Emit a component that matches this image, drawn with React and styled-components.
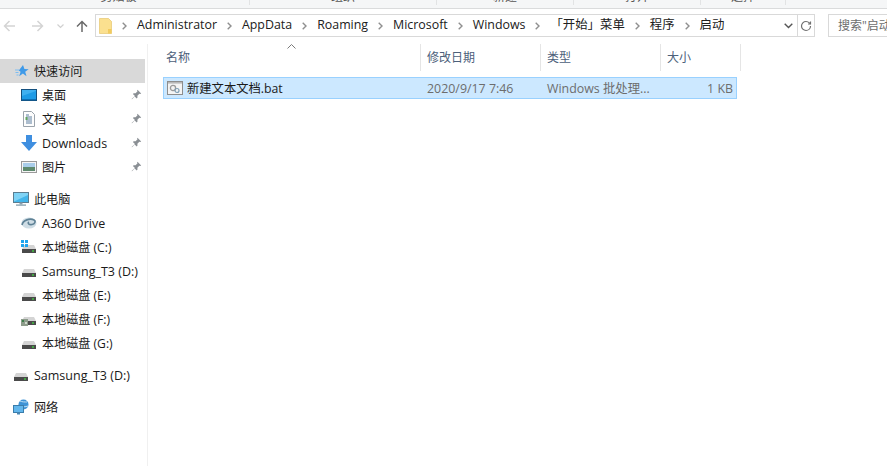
import React from 'react';
import styled, { createGlobalStyle } from 'styled-components';

const Global = createGlobalStyle`
  html, body { margin: 0; padding: 0; background: #fff; }
  body { font-family: "Liberation Sans", "Noto Sans CJK SC", sans-serif; }
`;
const FONT = `"Open Sans", "Noto Sans CJK SC", sans-serif`;

const Page = styled.div`
  width: 887px; height: 466px; overflow: hidden; display: flex; flex-direction: column;
  background: #fff; font-family: ${FONT}; font-size: 12px; color: #1a1a1a;
`;
const Ribbon = styled.div`
  height: 8px; flex: none; background: #f5f6f7; border-bottom: 1px solid #dadbdc;
  display: flex; overflow: hidden;
`;
const RibbonGroup = styled.div`
  width: ${p => p.$w}px; flex: none; height: 5px; border-right: 1px solid #e2e3e4; overflow: hidden;
  position: relative; text-align: center; color: #555; font-size: 12px; line-height: 1; box-sizing: border-box;
`;
const RibbonLabel = styled.span`
  position: absolute; left: 0; right: ${p => p.$pr || 0}px; top: -9px;
`;
const AddressRow = styled.div`
  height: 35px; flex: none; display: flex; align-items: flex-start; padding-top: 5px; box-sizing: border-box;
`;
const NavButton = styled.div`
  width: ${p => p.$w}px; margin-left: ${p => p.$ml}px; flex: none; display: flex; justify-content: center; align-items: center; height: 24px;
`;
const AddressBox = styled.div`
  margin-left: 7px; width: 720px; height: 23px; box-sizing: border-box; border: 1px solid #d9d9d9; display: flex; align-items: center;
`;
const FolderIcon = styled.svg`
  margin-left: 3px; flex: none;
`;
const Crumb = styled.span`
  font-size: 12.4px; white-space: nowrap; color: #202020; line-height: 20px; margin-top: -1px;
`;
const Chev = styled.svg`
  flex: none; margin: 0 10px;
`;
const Spacer = styled.div`flex: 1;`;
const AddrEnd = styled.div`
  width: 17px; flex: none; height: 21px; display: flex; align-items: center; justify-content: center;
`;
const Refresh = styled.div`
  width: 16px; flex: none; height: 21px; border-left: 1px solid #d9d9d9; display: flex; align-items: center; justify-content: center;
`;
const SearchBox = styled.div`
  margin-left: 13px; flex: 1; height: 23px; box-sizing: border-box; border: 1px solid #d9d9d9; border-right: none;
  padding-left: 9px; color: #6d6d6d; font-size: 12px; line-height: 21px; white-space: nowrap; overflow: hidden;
`;
const Body = styled.div`flex: 1; display: flex; min-height: 0;`;
const Sidebar = styled.div`
  width: 147px; flex: none; border-right: 1px solid #f0f0f0; padding-top: 15px;
`;
const NavRow = styled.div`
  height: 24px; width: 145px; display: flex; align-items: center; position: relative;
  padding-left: ${p => p.$indent}px; box-sizing: border-box;
  background: ${p => p.$active ? '#d9d9d9' : 'transparent'};
  margin-top: ${p => p.$gap || 0}px; color: #1a1a1a; white-space: nowrap;
`;
const NavIcon = styled.span`
  width: 16px; height: 16px; flex: none; margin-right: 5px; display: flex;
`;
const NavLabel = styled.span`
  font-size: ${p => p.$latin ? 12.5 : 12.1}px;
`;
const Pin = styled.svg`
  position: absolute; left: 131px; top: 6px;
`;
const Content = styled.div`flex: 1; min-width: 0; padding-left: 15px;`;
const HeaderRow = styled.div`
  height: 27px; display: flex; position: relative; color: #4c607a; font-size: 12px;
`;
const SortCaret = styled.svg`
  position: absolute; left: 124px; top: 0;
`;
const HeaderCell = styled.div`
  width: ${p => p.$w}px; flex: none; box-sizing: border-box; height: 27px; line-height: 27px; padding-left: ${p => p.$pl}px;
  border-right: 1px solid #e5e5e5; white-space: nowrap;
`;
const FileRow = styled.div`
  margin-top: 6px; width: 574px; height: 22px; box-sizing: border-box;
  background: #cce8ff; border: 1px solid #99d1ff; display: flex; align-items: center; color: #6d6d6d;
`;
const FileName = styled.div`
  width: 263px; flex: none; display: flex; align-items: center; color: #1a1a1a; font-size: 12.3px; padding-left: 3px; box-sizing: border-box;
`;
const FileCell = styled.div`
  width: ${p => p.$w}px; flex: none; white-space: nowrap; font-size: 12.4px; text-align: ${p => p.$right ? 'right' : 'left'};
`;
const BatSvg = styled.svg`
  margin-right: 4px; flex: none;
`;

const Arrow = ({ dir, color }) => (
  <svg width="12" height="12" viewBox="0 0 12 12" fill="none" stroke={color} strokeWidth="1.5">
    {dir === 'left' && <path d="M12 6H1.5M6.5 1L1.5 6l5 5" />}
    {dir === 'right' && <path d="M0 6h10.5M5.5 1l5 5-5 5" />}
    {dir === 'up' && <path d="M6 12V1.5M1 6.5l5-5 5 5" />}
  </svg>
);
const SmallChev = () => (
  <Chev width="5" height="8" viewBox="0 0 5 8" fill="none" stroke="#8f8f8f" strokeWidth="1.4"><path d="M0.7 0.8L4 4 .7 7.2" /></Chev>
);

const PinIcon = () => (
  <Pin width="11" height="11" viewBox="0 0 11 11">
    <path d="M6.5 0.8l3.7 3.7-1 .6-.9-.3-1.9 1.9.1 1.9-.8.8-2-2L1 10.2l-.4-.3 3.3-2.9-2-2 .8-.8 1.9.1L6.5 2.3l-.4-.8z" fill="#8a8f94" />
  </Pin>
);

const Star = () => (
  <svg width="16" height="16" viewBox="0 0 16 16">
    <path d="M10 2l1.4 4.1 4.3.1-3.5 2.6 1.3 4.4-3.6-2.6-3.7 2.6 1.4-4.4-1.8-1.4z" fill="#3f9ae8" />
    <path d="M2 7h4M2.5 9.5h3M3.5 12h2" stroke="#7cbdf2" strokeWidth="1" />
  </svg>
);
const Desktop = () => (
  <svg width="16" height="16" viewBox="0 0 16 16">
    <rect x="0.5" y="2.5" width="15" height="11" fill="#1e9be6" stroke="#14507f" />
    <path d="M1 9L15 4V3H1z" fill="#3fb0f0" />
    <rect x="1" y="12" width="14" height="1.2" fill="#0c6fb5" />
  </svg>
);
const Doc = () => (
  <svg width="16" height="16" viewBox="0 0 16 16">
    <path d="M2.5.5h8l3 3v12h-11z" fill="#fdfdfd" stroke="#9aa3ab" />
    <path d="M5 4h3M5 6h6M5 8h6M5 10h6M5 12h6" stroke="#5c7ea0" />
    <path d="M4.5 6h2v3h-2z" fill="#5fa45c" />
  </svg>
);
const Down = () => (
  <svg width="16" height="16" viewBox="0 0 16 16">
    <path d="M5 0h6v7h5l-8 9-8-9h5z" fill="#3f8fe0" />
  </svg>
);
const Pics = () => (
  <svg width="16" height="16" viewBox="0 0 16 16">
    <rect x="0.5" y="2.5" width="15" height="11" fill="#f5f5f5" stroke="#9a9a9a" />
    <rect x="2" y="4" width="12" height="4.5" fill="#a9cdea" />
    <rect x="2" y="8" width="12" height="4" fill="#5e8a6e" />
  </svg>
);
const PC = () => (
  <svg width="16" height="16" viewBox="0 0 16 16">
    <rect x="0.5" y="1.5" width="15" height="10" fill="#7fd3f5" stroke="#5b7d90" />
    <path d="M1 10.5L15 4v7H1z" fill="#43b5ea" />
    <rect x="6.5" y="11.5" width="3" height="2" fill="#8aa0ad" />
    <rect x="3" y="13.5" width="10" height="1.2" fill="#7d97a6" />
  </svg>
);
const Drive360 = () => (
  <svg width="16" height="16" viewBox="0 0 16 16" fill="none">
    <ellipse cx="8" cy="8" rx="7.5" ry="5.5" fill="#cfdde5" />
    <path d="M1 10c1-5 8-7 12-5 2 1 1 4-2 4.5C8 10 6 8 8 7" stroke="#5f8296" strokeWidth="1.6" />
  </svg>
);
const Hdd = ({ win, apps }) => (
  <svg width="16" height="16" viewBox="0 0 16 16">
    <path d="M3 6h10l2 4H1z" fill="#d4d4d4" />
    <rect x="1" y="10" width="14" height="4" fill="#4a4a4a" />
    <rect x="11" y="11.4" width="2" height="1.2" fill="#3fdc3f" />
    {win && <g fill="#1fa5ee"><rect x="0" y="1" width="3" height="3" /><rect x="4" y="1" width="3" height="3" /><rect x="0" y="5" width="3" height="3" /><rect x="4" y="5" width="3" height="3" /></g>}
    {apps && <g><rect x="0" y="8" width="7" height="7" fill="#8d9c8b" /><rect x="1" y="9" width="2" height="2" fill="#3c7d4b" /><rect x="4" y="11" width="2" height="2" fill="#cfd8cc" /></g>}
  </svg>
);
const Net = () => (
  <svg width="16" height="16" viewBox="0 0 16 16">
    <circle cx="10.5" cy="5.5" r="5" fill="#3e93d6" />
    <path d="M7 2c2 1 5 1 7 1M8 7c2 1 4 1 7 0" stroke="#bfe0f5" fill="none" />
    <rect x="0.5" y="6.5" width="10" height="7" fill="#62b6ec" stroke="#3a7dab" />
    <rect x="4" y="13.5" width="3" height="2" fill="#4a87b3" />
  </svg>
);
const BatIcon = () => (
  <BatSvg width="16" height="14" viewBox="0 0 16 14">
    <rect x="0.5" y="0.5" width="15" height="13" fill="#f4f4f4" stroke="#8d8d8d" />
    <rect x="1" y="1" width="14" height="1.6" fill="#b8b8b8" />
    <circle cx="6" cy="7" r="2.6" fill="none" stroke="#9a9a9a" strokeWidth="1.3" />
    <circle cx="10" cy="9.5" r="2" fill="none" stroke="#7f9fb5" strokeWidth="1.2" />
  </BatSvg>
);

const crumbs = ['Administrator', 'AppData', 'Roaming', 'Microsoft', 'Windows', '「开始」菜单', '程序', '启动'];

const nav = [
  { label: '快速访问', icon: <Star />, indent: 13, active: true },
  { label: '桌面', icon: <Desktop />, indent: 21, pin: true },
  { label: '文档', icon: <Doc />, indent: 21, pin: true },
  { label: 'Downloads', icon: <Down />, indent: 21, pin: true, latin: true },
  { label: '图片', icon: <Pics />, indent: 21, pin: true },
  { label: '此电脑', icon: <PC />, indent: 13, gap: 8 },
  { label: 'A360 Drive', icon: <Drive360 />, indent: 21, latin: true },
  { label: '本地磁盘 (C:)', icon: <Hdd win />, indent: 21 },
  { label: 'Samsung_T3 (D:)', icon: <Hdd />, indent: 21, latin: true },
  { label: '本地磁盘 (E:)', icon: <Hdd />, indent: 21 },
  { label: '本地磁盘 (F:)', icon: <Hdd apps />, indent: 21 },
  { label: '本地磁盘 (G:)', icon: <Hdd />, indent: 21 },
  { label: 'Samsung_T3 (D:)', icon: <Hdd />, indent: 13, gap: 8, latin: true },
  { label: '网络', icon: <Net />, indent: 13, gap: 8 },
];

export default function App() {
  return (
    <Page>
      <Global />
      <Ribbon>
        <RibbonGroup $w={250}><RibbonLabel $pr={12}>剪贴板</RibbonLabel></RibbonGroup>
        <RibbonGroup $w={187}><RibbonLabel>组织</RibbonLabel></RibbonGroup>
        <RibbonGroup $w={137}><RibbonLabel>新建</RibbonLabel></RibbonGroup>
        <RibbonGroup $w={127}><RibbonLabel>打开</RibbonLabel></RibbonGroup>
        <RibbonGroup $w={85}><RibbonLabel>选择</RibbonLabel></RibbonGroup>
      </Ribbon>
      <AddressRow>
        <NavButton $w={12} $ml={3}><Arrow dir="left" color="#d4d4d4" /></NavButton>
        <NavButton $w={12} $ml={17}><Arrow dir="right" color="#d4d4d4" /></NavButton>
        <NavButton $w={8} $ml={12}>
          <svg width="7" height="5" viewBox="0 0 7 5" fill="none" stroke="#d0d0d0" strokeWidth="1.2"><path d="M.5.5l3 3 3-3" /></svg>
        </NavButton>
        <NavButton $w={12} $ml={12}><Arrow dir="up" color="#6a6a6a" /></NavButton>
        <AddressBox>
          <FolderIcon width="13" height="16" viewBox="0 0 13 16">
            <path d="M.5.5h9l3 3v12H.5z" fill="#fbe08f" stroke="#e2bf62" strokeWidth=".6" />
            <rect x="9" y="11" width="3.5" height="4.5" fill="#f2cb5e" />
          </FolderIcon>
          {crumbs.map(c => (
            <React.Fragment key={c}>
              <SmallChev />
              <Crumb>{c}</Crumb>
            </React.Fragment>
          ))}
          <Spacer />
          <AddrEnd>
            <svg width="9" height="6" viewBox="0 0 9 6" fill="none" stroke="#555" strokeWidth="1.4"><path d="M.7.7l3.8 3.8L8.3.7" /></svg>
          </AddrEnd>
          <Refresh>
            <svg width="12" height="12" viewBox="0 0 24 24" fill="none" stroke="#6f6f6f" strokeWidth="2.4"><path d="M21 12a9 9 0 1 1-9-9c2.52 0 4.93 1 6.74 2.74L21 8" /><path d="M21 3v5h-5" /></svg>
          </Refresh>
        </AddressBox>
        <SearchBox>搜索"启动"</SearchBox>
      </AddressRow>
      <Body>
        <Sidebar>
          {nav.map((n, i) => (
            <NavRow key={i} $indent={n.indent} $active={n.active} $gap={n.gap}>
              <NavIcon>{n.icon}</NavIcon>
              <NavLabel $latin={n.latin}>{n.label}</NavLabel>
              {n.pin && <PinIcon />}
            </NavRow>
          ))}
        </Sidebar>
        <Content>
          <HeaderRow>
            <SortCaret width="9" height="5" viewBox="0 0 9 5" fill="none" stroke="#7a7a7a"><path d="M.5 4.5l4-4 4 4" /></SortCaret>
            <HeaderCell $w={258} $pl={3}>名称</HeaderCell>
            <HeaderCell $w={120} $pl={6}>修改日期</HeaderCell>
            <HeaderCell $w={120} $pl={6}>类型</HeaderCell>
            <HeaderCell $w={80} $pl={6}>大小</HeaderCell>
          </HeaderRow>
          <FileRow>
            <FileName><BatIcon />新建文本文档.bat</FileName>
            <FileCell $w={120}>2020/9/17 7:46</FileCell>
            <FileCell $w={112}>Windows 批处理...</FileCell>
            <FileCell $w={74} $right>1 KB</FileCell>
          </FileRow>
        </Content>
      </Body>
    </Page>
  );
}
